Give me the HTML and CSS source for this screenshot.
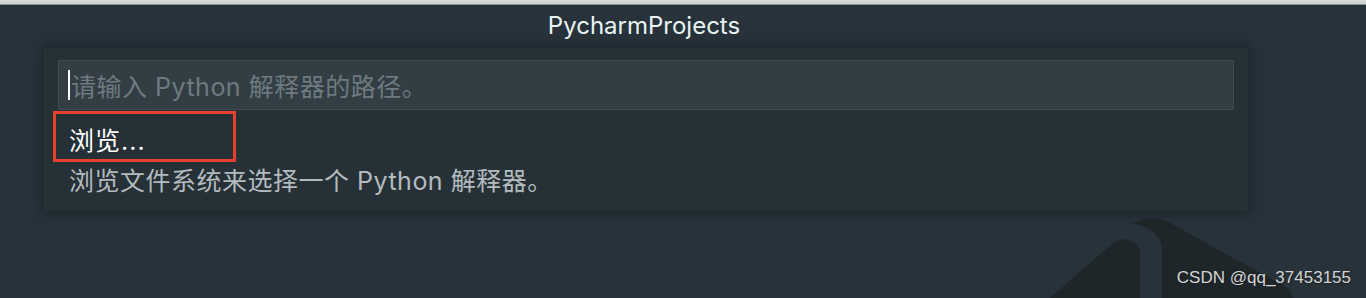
FILE: index.html
```html
<!DOCTYPE html>
<html lang="zh-CN">
<head>
<meta charset="utf-8">
<title>PycharmProjects</title>
<link rel="stylesheet" href="styles.css">
</head>
<body>
<div class="page">
  <svg class="bg-art" width="1366" height="298" viewBox="0 0 1366 298" aria-hidden="true">
    <path d="M1050,298 L1112,244 C1120,237 1134,237 1140,250 L1140,298 Z" fill="#1f262a"/>
    <path d="M1133,224 C1145,216 1160,217 1170,223 L1284,286 C1290,289 1292,294 1293,298 L1162,298 L1162,250 C1162,236 1150,226 1133,224 Z" fill="#1f262a"/>
  </svg>
  <div class="top-strip"></div>
  <header class="title-bar">PycharmProjects</header>
  <section class="picker">
    <div class="input-wrap">
      <div class="input">
        <span class="caret"></span>
        <span class="placeholder">请输入 Python 解释器的路径。</span>
      </div>
    </div>
    <div class="option">浏览...</div>
    <div class="desc">浏览文件系统来选择一个 Python 解释器。</div>
    <div class="highlight"></div>
  </section>
  <div class="watermark">CSDN @qq_37453155</div>
</div>
</body>
</html>
```
FILE: styles.css
```css
html, body {
  margin: 0;
  padding: 0;
}
body {
  background: #27323a;
  font-family: Inter, "Noto Sans", "Noto Sans CJK SC", sans-serif;
}
.page {
  position: relative;
  width: 1366px;
  height: 298px;
  overflow: hidden;
  background: #27323a;
}
.bg-art {
  position: absolute;
  left: 0;
  top: 0;
  z-index: 0;
}
.top-strip {
  position: relative;
  z-index: 1;
  height: 4px;
  background: linear-gradient(#d9dada, #cfd0d0);
  border-bottom: 1px solid #8e9598;
}
.title-bar {
  position: relative;
  z-index: 1;
  height: 43px;
  line-height: 41px;
  text-align: center;
  color: #e8f4f4;
  font-size: 24px;
  font-family: Inter, "Noto Sans", sans-serif;
  padding-right: 78px;
  box-sizing: border-box;
}
.picker {
  position: relative;
  z-index: 1;
  margin-left: 44px;
  width: 1204px;
  height: 163px;
  box-sizing: border-box;
  background: #263137;
  box-shadow: 0 0 10px 2px rgba(20, 26, 30, 0.55);
  font-family: Inter, "Noto Sans CJK SC", sans-serif;
  font-size: 25px;
  letter-spacing: 0.5px;
}
.input-wrap {
  padding: 12px 14px 0;
}
.input {
  height: 50px;
  box-sizing: border-box;
  background: #323e44;
  border: 1px solid #3e4a50;
  display: flex;
  align-items: center;
  padding-left: 9px;
}
.caret {
  width: 2px;
  height: 30px;
  background: #ffffff;
  margin-right: 1px;
}
.placeholder {
  color: #6d7a80;
  white-space: nowrap;
}
.option {
  margin-top: 11px;
  padding-left: 25px;
  height: 40px;
  line-height: 40px;
  color: #ffffff;
  letter-spacing: 1px;
}
.desc {
  padding-left: 25px;
  height: 40px;
  line-height: 40px;
  color: #b3bbbf;
}
.highlight {
  position: absolute;
  left: 9px;
  top: 63px;
  width: 183px;
  height: 51px;
  box-sizing: border-box;
  border: 3px solid #e8412a;
}
.watermark {
  position: absolute;
  z-index: 2;
  right: 15px;
  top: 268px;
  font-family: "Liberation Sans", Arial, sans-serif;
  font-size: 17px;
  color: #d2d4d5;
  text-shadow: 1px 1px 1px #1a1f22;
}
```
